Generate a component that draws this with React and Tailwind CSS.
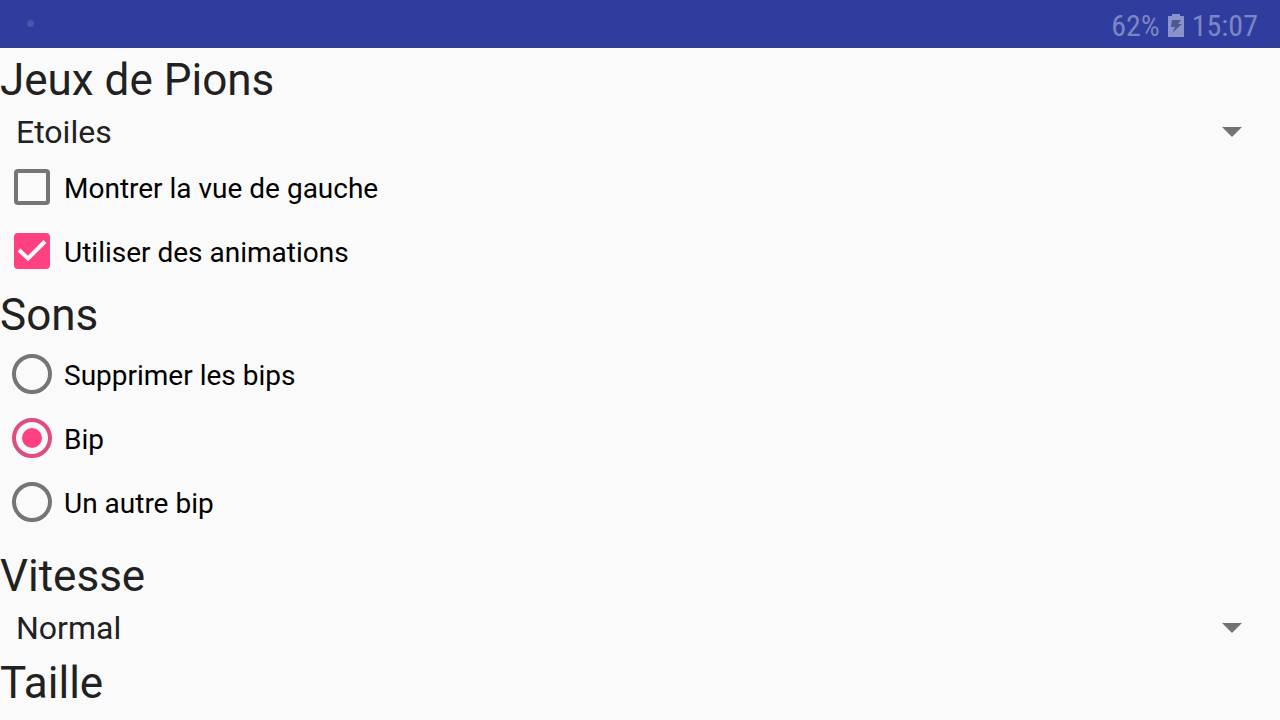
import React, { useState } from "react";

const pieceSets = ["Etoiles", "Ronds", "Animaux"];
const speeds = ["Lent", "Normal", "Rapide"];
const sounds = [
  { id: "none", label: "Supprimer les bips" },
  { id: "beep", label: "Bip" },
  { id: "other", label: "Un autre bip" },
];

function StatusBar() {
  return (
    <header className="flex h-12 items-center justify-between border-b border-[#34408f] bg-[#303d9f] pl-[27px] pr-[22px] text-[#7c86c4]">
      <span className="size-[7px] rounded-full bg-[#4956ac]" />
      <div className="flex items-center gap-2 pt-1 font-['Roboto_Condensed','Roboto',sans-serif] text-[30px] leading-10">
        <span>62%</span>
        <svg viewBox="0 0 16 24" className="h-6 w-4" aria-hidden="true">
          <path d="M4 0h8v2h4v21H0V2h4z" fill="#8b93cf" />
          <path d="M4 6h9l-3 4h4L4 19l3-6H3z" fill="#50578e" />
        </svg>
        <span>15:07</span>
      </div>
    </header>
  );
}

function Title({ children, htmlFor }) {
  return (
    <h2 className="pt-[6px] text-[44px] leading-[53px] text-[#212121]">
      {htmlFor ? <label htmlFor={htmlFor}>{children}</label> : children}
    </h2>
  );
}

function Spinner({ id, options, value, onChange }) {
  return (
    <div className="relative">
      <select
        id={id}
        value={value}
        onChange={(e) => onChange(e.target.value)}
        className="block h-12 w-full appearance-none bg-transparent pl-4 pr-20 pt-[2px] text-[32px] leading-[46px] text-[#212121] outline-none"
      >
        {options.map((o) => (
          <option key={o}>{o}</option>
        ))}
      </select>
      <svg
        viewBox="0 0 20 10"
        className="pointer-events-none absolute right-[38px] top-5 h-[10px] w-5"
        aria-hidden="true"
      >
        <path d="M0 0h20L10 10z" fill="#737373" />
      </svg>
    </div>
  );
}

function CheckRow({ label, checked, onChange }) {
  return (
    <label className="flex h-16 items-center gap-[14px] pl-[14px] text-[28px] leading-8 text-black">
      <span className="relative size-9">
        <input
          type="checkbox"
          checked={checked}
          onChange={(e) => onChange(e.target.checked)}
          className="block size-9 appearance-none rounded-[4px] border-4 border-[#757575] checked:border-[#ff4081] checked:bg-[#ff4081]"
        />
        {checked && (
          <svg viewBox="0 0 36 36" className="pointer-events-none absolute inset-0" aria-hidden="true">
            <path d="M5 17 14 25.500 31 8.500" fill="none" stroke="#fafafa" strokeWidth="4" />
          </svg>
        )}
      </span>
      <span className="pt-1">{label}</span>
    </label>
  );
}

function RadioRow({ name, label, checked, onChange }) {
  return (
    <label className="flex h-16 items-center gap-3 pl-3 text-[28px] leading-8 text-black">
      <span className="relative size-10">
        <input
          type="radio"
          name={name}
          checked={checked}
          onChange={onChange}
          className="block size-10 appearance-none rounded-full border-4 border-[#757575] checked:border-[#e04c80]"
        />
        {checked && (
          <span className="pointer-events-none absolute inset-[10px] rounded-full bg-[#ff4081]" />
        )}
      </span>
      <span className="pt-1">{label}</span>
    </label>
  );
}

export default function App() {
  const [pieces, setPieces] = useState("Etoiles");
  const [leftView, setLeftView] = useState(false);
  const [animations, setAnimations] = useState(true);
  const [sound, setSound] = useState("beep");
  const [speed, setSpeed] = useState("Normal");

  return (
    <div className="min-h-screen bg-[#fafafa] font-['Roboto',sans-serif]">
      <StatusBar />
      <main>
        <Title htmlFor="pieces">Jeux de Pions</Title>
        <Spinner id="pieces" options={pieceSets} value={pieces} onChange={setPieces} />
        <CheckRow label="Montrer la vue de gauche" checked={leftView} onChange={setLeftView} />
        <CheckRow label="Utiliser des animations" checked={animations} onChange={setAnimations} />

        <Title>Sons</Title>
        <div role="radiogroup" aria-label="Sons" className="pb-[10px]">
          {sounds.map((s) => (
            <RadioRow
              key={s.id}
              name="sound"
              label={s.label}
              checked={sound === s.id}
              onChange={() => setSound(s.id)}
            />
          ))}
        </div>

        <Title htmlFor="speed">Vitesse</Title>
        <Spinner id="speed" options={speeds} value={speed} onChange={setSpeed} />

        <Title>Taille</Title>
      </main>
    </div>
  );
}
